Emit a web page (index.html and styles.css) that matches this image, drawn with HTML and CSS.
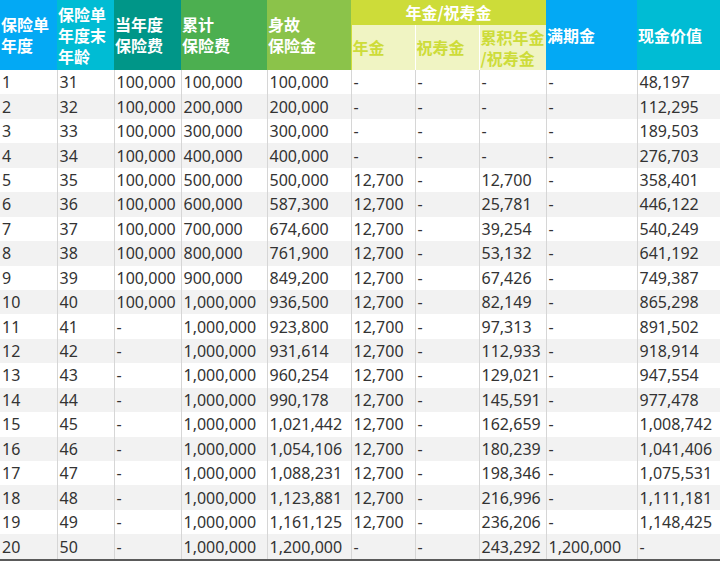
FILE: index.html
```html
<!DOCTYPE html>
<html lang="zh">
<head>
<meta charset="utf-8">
<link rel="stylesheet" href="styles.css">
</head>
<body>
<table class="tbl">
<colgroup>
<col class="w57"><col class="w57"><col class="w67"><col class="w86"><col class="w84"><col class="w64"><col class="w64"><col class="w67"><col class="w91"><col class="w83">
</colgroup>
<thead>
<tr class="h1">
<th rowspan="2" class="c-blue">保险单<br>年度</th>
<th rowspan="2" class="c-cyan">保险单<br>年度末<br>年龄</th>
<th rowspan="2" class="c-teal">当年度<br>保险费</th>
<th rowspan="2" class="c-green">累计<br>保险费</th>
<th rowspan="2" class="c-lgreen">身故<br>保险金</th>
<th colspan="3" class="c-lime group">年金/祝寿金</th>
<th rowspan="2" class="c-blue">满期金</th>
<th rowspan="2" class="c-cyan">现金价值</th>
</tr>
<tr class="h2">
<th class="sub first">年金</th>
<th class="sub">祝寿金</th>
<th class="sub">累积年金<br>/祝寿金</th>
</tr>
</thead>
<tbody>
<tr><td>1</td><td>31</td><td>100,000</td><td>100,000</td><td>100,000</td><td>-</td><td>-</td><td>-</td><td>-</td><td>48,197</td></tr>
<tr><td>2</td><td>32</td><td>100,000</td><td>200,000</td><td>200,000</td><td>-</td><td>-</td><td>-</td><td>-</td><td>112,295</td></tr>
<tr><td>3</td><td>33</td><td>100,000</td><td>300,000</td><td>300,000</td><td>-</td><td>-</td><td>-</td><td>-</td><td>189,503</td></tr>
<tr><td>4</td><td>34</td><td>100,000</td><td>400,000</td><td>400,000</td><td>-</td><td>-</td><td>-</td><td>-</td><td>276,703</td></tr>
<tr><td>5</td><td>35</td><td>100,000</td><td>500,000</td><td>500,000</td><td>12,700</td><td>-</td><td>12,700</td><td>-</td><td>358,401</td></tr>
<tr><td>6</td><td>36</td><td>100,000</td><td>600,000</td><td>587,300</td><td>12,700</td><td>-</td><td>25,781</td><td>-</td><td>446,122</td></tr>
<tr><td>7</td><td>37</td><td>100,000</td><td>700,000</td><td>674,600</td><td>12,700</td><td>-</td><td>39,254</td><td>-</td><td>540,249</td></tr>
<tr><td>8</td><td>38</td><td>100,000</td><td>800,000</td><td>761,900</td><td>12,700</td><td>-</td><td>53,132</td><td>-</td><td>641,192</td></tr>
<tr><td>9</td><td>39</td><td>100,000</td><td>900,000</td><td>849,200</td><td>12,700</td><td>-</td><td>67,426</td><td>-</td><td>749,387</td></tr>
<tr><td>10</td><td>40</td><td>100,000</td><td>1,000,000</td><td>936,500</td><td>12,700</td><td>-</td><td>82,149</td><td>-</td><td>865,298</td></tr>
<tr><td>11</td><td>41</td><td>-</td><td>1,000,000</td><td>923,800</td><td>12,700</td><td>-</td><td>97,313</td><td>-</td><td>891,502</td></tr>
<tr><td>12</td><td>42</td><td>-</td><td>1,000,000</td><td>931,614</td><td>12,700</td><td>-</td><td>112,933</td><td>-</td><td>918,914</td></tr>
<tr><td>13</td><td>43</td><td>-</td><td>1,000,000</td><td>960,254</td><td>12,700</td><td>-</td><td>129,021</td><td>-</td><td>947,554</td></tr>
<tr><td>14</td><td>44</td><td>-</td><td>1,000,000</td><td>990,178</td><td>12,700</td><td>-</td><td>145,591</td><td>-</td><td>977,478</td></tr>
<tr><td>15</td><td>45</td><td>-</td><td>1,000,000</td><td>1,021,442</td><td>12,700</td><td>-</td><td>162,659</td><td>-</td><td>1,008,742</td></tr>
<tr><td>16</td><td>46</td><td>-</td><td>1,000,000</td><td>1,054,106</td><td>12,700</td><td>-</td><td>180,239</td><td>-</td><td>1,041,406</td></tr>
<tr><td>17</td><td>47</td><td>-</td><td>1,000,000</td><td>1,088,231</td><td>12,700</td><td>-</td><td>198,346</td><td>-</td><td>1,075,531</td></tr>
<tr><td>18</td><td>48</td><td>-</td><td>1,000,000</td><td>1,123,881</td><td>12,700</td><td>-</td><td>216,996</td><td>-</td><td>1,111,181</td></tr>
<tr><td>19</td><td>49</td><td>-</td><td>1,000,000</td><td>1,161,125</td><td>12,700</td><td>-</td><td>236,206</td><td>-</td><td>1,148,425</td></tr>
<tr class="last"><td>20</td><td>50</td><td>-</td><td>1,000,000</td><td>1,200,000</td><td>-</td><td>-</td><td>243,292</td><td>1,200,000</td><td>-</td></tr>
</tbody>
</table>
</body>
</html>
```
FILE: styles.css
```css
html, body {
  margin: 0;
  padding: 0;
  background: #fff;
}
.tbl {
  width: 720px;
  table-layout: fixed;
  border-collapse: collapse;
  border-spacing: 0;
  font-family: "Noto Sans", "Noto Sans CJK SC", sans-serif;
  font-size: 16px;
  color: #333;
}
.w57 { width: 57px; }
.w67 { width: 67px; }
.w86 { width: 86px; }
.w84 { width: 84px; }
.w64 { width: 64px; }
.w91 { width: 91px; }
.w83 { width: 83px; }

.tbl th {
  font-family: "Noto Sans CJK SC", sans-serif;
  font-weight: 700;
  font-size: 16px;
  line-height: 21px;
  text-align: left;
  vertical-align: middle;
  color: #fff;
  padding: 0 0 0 1px;
  white-space: nowrap;
}
.h1 { height: 25px; }
.h2 { height: 45px; }
.c-blue { background: #03a9f4; }
.c-cyan { background: #00bcd4; }
.c-teal { background: #009688; }
.c-green { background: #4caf50; }
.c-lgreen { background: #8bc34a; }
.c-lime { background: #cddc39; }
.tbl th.group {
  text-align: center;
  padding: 0;
}
.tbl th.sub {
  background: #f0f4c3;
  color: #cddc39;
  border-left: 1px solid #fff;
}
.tbl th.sub.first {
  border-left: 1px solid #cddc39;
}

.tbl td {
  height: 24.45px;
  padding: 0 0 0 2px;
  line-height: 20px;
  white-space: nowrap;
  border-left: 1px solid #d6d6d6;
  overflow: hidden;
}
.tbl td:first-child { border-left: none; }
.tbl tbody tr:nth-child(even) td { background: #f2f2f2; }
.tbl tbody tr.last td { border-bottom: 2px solid #5a5a5a; }
```
